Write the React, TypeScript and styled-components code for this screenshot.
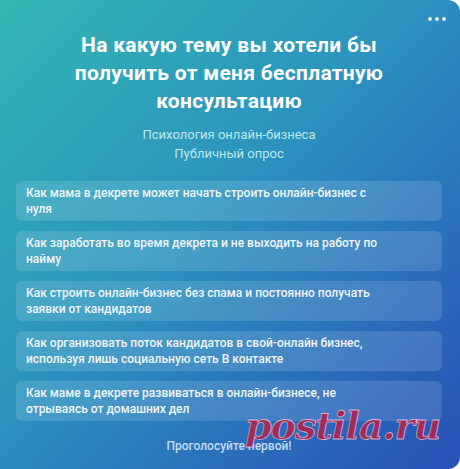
import React from 'react';
import styled, { createGlobalStyle } from 'styled-components';

const GlobalStyle = createGlobalStyle`
	html, body {
		margin: 0;
		padding: 0;
		background: #ffffff;
	}
	* {
		box-sizing: border-box;
	}
`;

const options: string[] = [
	'Как мама в декрете может начать строить онлайн-бизнес с нуля',
	'Как заработать во время декрета и не выходить на работу по найму',
	'Как строить онлайн-бизнес без спама и постоянно получать заявки от кандидатов',
	'Как организовать поток кандидатов в свой-онлайн бизнес, используя лишь социальную сеть В контакте',
	'Как маме в декрете развиваться в онлайн-бизнесе, не отрываясь от домашних дел',
];

function App() {
	return (
		<>
			<GlobalStyle />
			<Card>
				<MoreButton aria-label="Ещё">
					<Dot />
					<Dot />
					<Dot />
				</MoreButton>
				<Title>На какую тему вы хотели бы получить от меня бесплатную консультацию</Title>
				<Meta>
					<p>Психология онлайн-бизнеса</p>
					<p>Публичный опрос</p>
				</Meta>
				<OptionList>
					{options.map((text) => (
						<OptionItem key={text}>
							<span>{text}</span>
						</OptionItem>
					))}
				</OptionList>
				<Footer>Проголосуйте первой!</Footer>
				<Watermark>postila.ru</Watermark>
			</Card>
		</>
	);
}

const Card = styled.div`
	position: relative;
	width: 460px;
	height: 469px;
	overflow: hidden;
	padding: 31px 18px 0 16px;
	border-radius: 0 12px 12px 0;
	background: linear-gradient(135deg, #32b6b3 0%, #2b93bf 45%, #2a6dbb 75%, #2750b6 100%);
	font-family: Roboto, 'Liberation Sans', Arial, sans-serif;
	color: #ffffff;
`;

const MoreButton = styled.button`
	position: absolute;
	top: 17px;
	right: 14px;
	display: flex;
	gap: 3px;
	padding: 0;
	border: none;
	background: none;
	cursor: pointer;
`;

const Dot = styled.span`
	width: 4px;
	height: 4px;
	border-radius: 50%;
	background: #eaf4fb;
`;

const Title = styled.h1`
	margin: 0 auto;
	width: 360px;
	font-size: 21px;
	line-height: 28px;
	font-weight: 700;
	letter-spacing: 0.3px;
	text-align: center;
	color: #ffffff;
`;

const Meta = styled.div`
	margin-top: 10px;
	text-align: center;
	font-size: 13px;
	line-height: 19px;
	color: #bfe8ea;
	p {
		margin: 0;
	}
`;

const OptionList = styled.div`
	display: flex;
	flex-direction: column;
	gap: 10px;
	margin-top: 18px;
`;

const OptionItem = styled.div`
	display: flex;
	align-items: center;
	min-height: 40px;
	padding: 4px 56px 4px 10px;
	border-radius: 6px;
	background: rgba(255, 255, 255, 0.13);
	font-size: 12px;
	line-height: 16px;
	font-weight: 500;
	color: #f0f6fb;
`;

const Footer = styled.div`
	margin-top: 16px;
	text-align: center;
	font-size: 12px;
	line-height: 18px;
	font-weight: 500;
	color: #c6dcf2;
`;

const Watermark = styled.span`
	position: absolute;
	left: 245px;
	top: 407px;
	font-family: 'DejaVu Serif', 'Liberation Serif', serif;
	font-style: italic;
	font-weight: 700;
	font-size: 38px;
	line-height: 1;
	letter-spacing: -1px;
	color: #9e2b5b;
	-webkit-text-stroke: 0.8px rgba(255, 220, 235, 0.7);
	pointer-events: none;
`;

export default App;
